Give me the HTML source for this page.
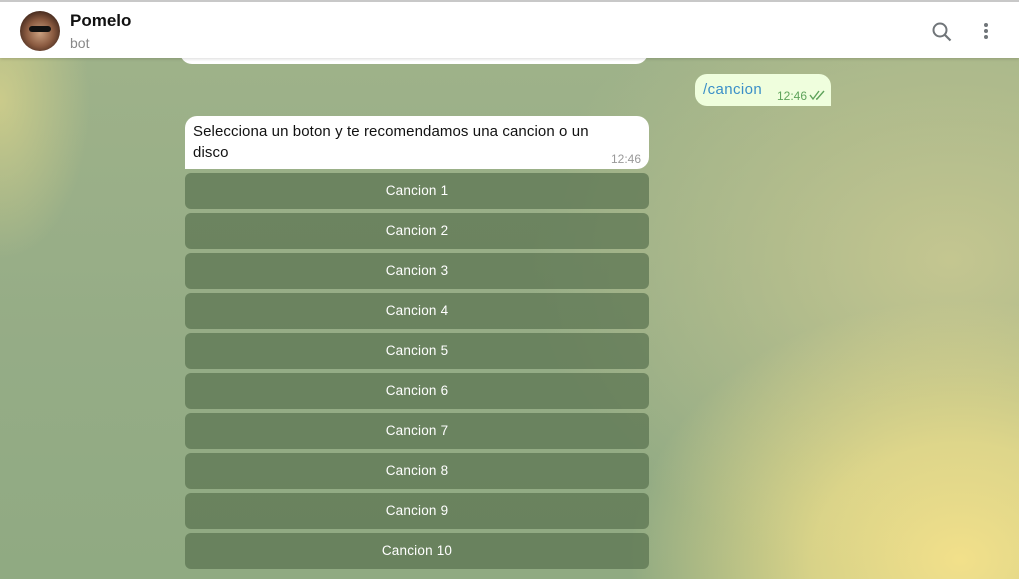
<!DOCTYPE html>
<html><head><meta charset="utf-8"><style>
*{margin:0;padding:0;box-sizing:border-box}
body{width:1019px;height:579px;overflow:hidden;font-family:"Liberation Sans",sans-serif;position:relative;
background:
radial-gradient(ellipse 330px 260px at 960px 560px,#f2e08a 0%,rgba(240,224,138,0.75) 45%,rgba(240,224,138,0) 100%),
radial-gradient(ellipse 90px 160px at 0px 100px,rgba(222,214,140,0.7),rgba(222,214,140,0) 100%),
radial-gradient(ellipse 420px 320px at 950px 260px,#c4c690,rgba(192,196,140,0) 100%),
linear-gradient(180deg,#a0b38a 0%,#95ac86 60%,#90aa82 100%);}
.hdr{position:absolute;left:0;top:0;width:1019px;height:58px;background:#fff;border-top:2px solid #c8c8c8;box-shadow:0 1px 3px rgba(0,0,0,.15);z-index:2}
.av{position:absolute;left:20px;top:9px;width:40px;height:40px;border-radius:50%;background:radial-gradient(circle at 50% 55%,#c9a080 0%,#8a5a40 45%,#3a2218 80%)}
.av:after{content:"";position:absolute;left:9px;top:15px;width:22px;height:6px;background:#111;border-radius:3px}
.name{position:absolute;left:70px;top:9px;font-size:17px;font-weight:bold;color:#111}
.sub{position:absolute;left:70px;top:33px;font-size:14px;color:#888}
.b{position:absolute;background:#fff;border-radius:12px}
.btn{position:absolute;left:185px;width:464px;height:36px;background:rgba(90,115,80,.72);border-radius:6px;color:#fff;font-size:13.5px;text-align:center;line-height:36px;letter-spacing:.2px}
</style></head><body>
<div class="hdr">
<div class="av"></div>
<div class="name">Pomelo</div>
<div class="sub">bot</div>
<svg style="position:absolute;left:931px;top:19px" width="22" height="22" viewBox="0 0 22 22"><circle cx="9" cy="9" r="6.5" fill="none" stroke="#707579" stroke-width="2"/><path d="M14 14l5.5 5.5" stroke="#707579" stroke-width="2.2"/></svg>
<svg style="position:absolute;left:982px;top:20px" width="8" height="20"><circle cx="4" cy="3" r="2" fill="#707579"/><circle cx="4" cy="9" r="2" fill="#707579"/><circle cx="4" cy="15" r="2" fill="#707579"/></svg>
</div>
<div class="b" style="left:180px;top:40px;width:468px;height:24px;border-radius:0 0 12px 12px"></div>
<div class="b" style="left:695px;top:74px;width:136px;height:32px;background:#effedd;border-bottom-right-radius:0"></div>
<div style="position:absolute;left:703px;top:81px;font-size:15px;color:#3a8fc8;letter-spacing:.4px">/cancion</div>
<div style="position:absolute;left:777px;top:89px;font-size:12px;color:#5ea35a">12:46</div>
<svg style="position:absolute;left:809px;top:89px" width="18" height="12"><path d="M1 6l3 4 6-8M7 10l1 0 7-8" fill="none" stroke="#5ea35a" stroke-width="1.4"/></svg>
<div class="b" style="left:185px;top:116px;width:464px;height:53px;border-bottom-left-radius:0"></div>
<div style="position:absolute;left:193px;top:121px;font-size:15px;color:#111;line-height:21px;width:425px;letter-spacing:.1px">Selecciona un boton y te recomendamos una cancion o un disco</div>
<div style="position:absolute;left:611px;top:152px;font-size:12px;color:#999">12:46</div>
<div class="btn" style="top:173px">Cancion 1</div>
<div class="btn" style="top:213px">Cancion 2</div>
<div class="btn" style="top:253px">Cancion 3</div>
<div class="btn" style="top:293px">Cancion 4</div>
<div class="btn" style="top:333px">Cancion 5</div>
<div class="btn" style="top:373px">Cancion 6</div>
<div class="btn" style="top:413px">Cancion 7</div>
<div class="btn" style="top:453px">Cancion 8</div>
<div class="btn" style="top:493px">Cancion 9</div>
<div class="btn" style="top:533px">Cancion 10</div>
</body></html>
